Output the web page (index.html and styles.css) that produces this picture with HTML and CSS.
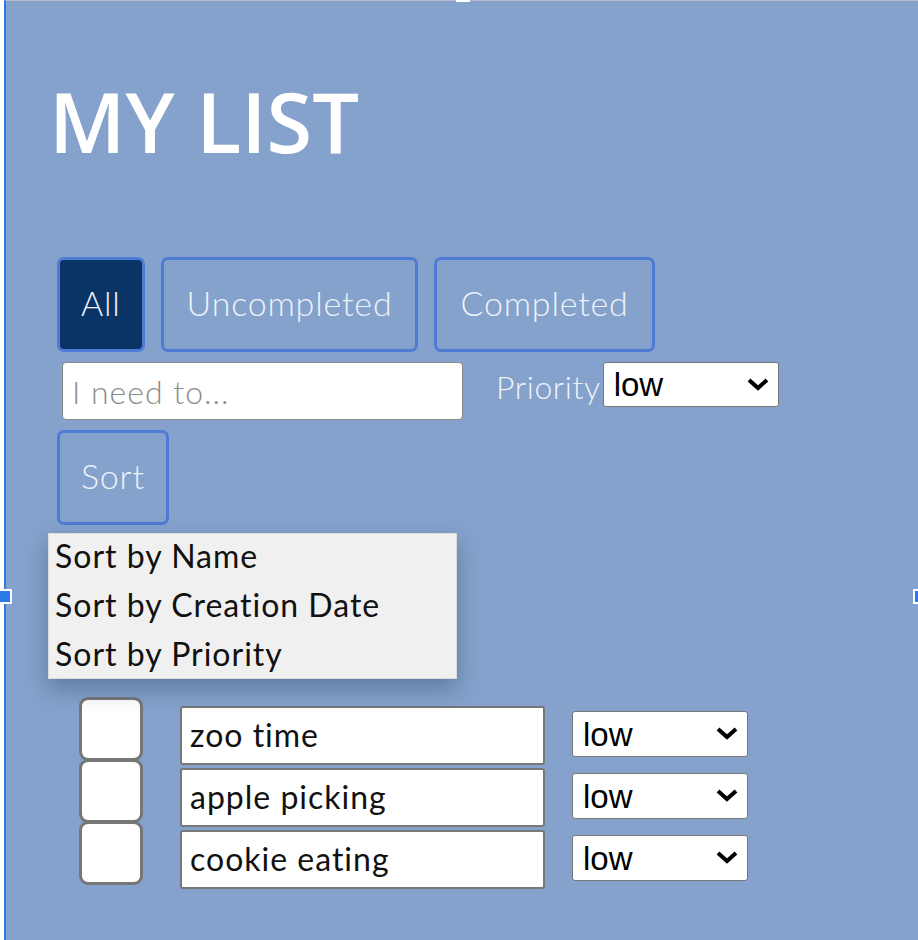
FILE: index.html
```html
<!DOCTYPE html>
<html lang="en">
<head>
  <meta charset="UTF-8">
  <meta name="viewport" content="width=device-width, initial-scale=1.0">
  <title>My List</title>
  <link rel="stylesheet" href="styles.css">
</head>
<body>
<div class="frame">
  <!-- maniglie di selezione -->
  <span class="handle handle-left"></span>
  <span class="handle handle-right"></span>
  <span class="notch"></span>

  <div class="app">
    <h1 class="title">MY LIST</h1>

    <div class="filters">
      <button class="filter active">All</button>
      <button class="filter">Uncompleted</button>
      <button class="filter">Completed</button>
    </div>

    <div class="new-item">
      <input class="new-input" type="text" placeholder="I need to...">
      <label class="priority-label">Priority</label>
      <span class="select-wrap">
        <select class="priority">
          <option>low</option>
          <option>medium</option>
          <option>high</option>
        </select>
        <svg class="chevron" viewBox="0 0 24 15"><path d="M3 3 L12 11 L21 3" fill="none" stroke="#000" stroke-width="4"/></svg>
      </span>
    </div>

    <div class="sort-box">
      <button class="filter sort">Sort</button>
      <ul class="sort-menu">
        <li>Sort by Name</li>
        <li>Sort by Creation Date</li>
        <li>Sort by Priority</li>
      </ul>
    </div>

    <ul class="todo-list">
      <li class="todo">
        <span class="check"></span>
        <input class="todo-text" type="text" value="zoo time">
        <span class="select-wrap small">
          <select class="priority"><option>low</option></select>
          <svg class="chevron" viewBox="0 0 24 15"><path d="M3 3 L12 11 L21 3" fill="none" stroke="#000" stroke-width="4"/></svg>
        </span>
      </li>
      <li class="todo">
        <span class="check"></span>
        <input class="todo-text" type="text" value="apple picking">
        <span class="select-wrap small">
          <select class="priority"><option>low</option></select>
          <svg class="chevron" viewBox="0 0 24 15"><path d="M3 3 L12 11 L21 3" fill="none" stroke="#000" stroke-width="4"/></svg>
        </span>
      </li>
      <li class="todo">
        <span class="check"></span>
        <input class="todo-text" type="text" value="cookie eating">
        <span class="select-wrap small">
          <select class="priority"><option>low</option></select>
          <svg class="chevron" viewBox="0 0 24 15"><path d="M3 3 L12 11 L21 3" fill="none" stroke="#000" stroke-width="4"/></svg>
        </span>
      </li>
    </ul>
  </div>
</div>
</body>
</html>
```

FILE: styles.css
```css
html,
body {
  overflow: hidden;
}
body {
  margin: 0;
  background-color: #fff;
  font-family: Lato, "Open Sans", sans-serif;
}
/* Riquadro selezionato */
.frame {
  position: relative;
  margin-left: 4px;
  height: 939px;
  background-color: #84a2cb;
  border-left: 2px solid #2a7be6;
  border-top: 1px solid #b9bcc6;
}
.handle {
  position: absolute;
  top: 588px;
  width: 10px;
  height: 11px;
  background-color: #2a7be6;
  border: 2px solid #fff;
}
.handle-left {
  left: -8px;
}
.handle-right {
  right: -9px;
}
.notch {
  position: absolute;
  top: -1px;
  left: 450px;
  width: 14px;
  height: 2px;
  background-color: #fff;
}
.app {
  padding: 78px 0 0 51px;
}
.title {
  margin: 0 0 95px -8px;
  font-family: "Open Sans", sans-serif;
  font-weight: 600;
  font-size: 83px;
  line-height: 83px;
  color: #fff;
}
/* Pulsanti filtro */
.filters {
  display: flex;
  gap: 16px;
}
.filter {
  height: 95px;
  padding: 0 23px 5px;
  border: 3px solid #4e7bd4;
  border-radius: 7px;
  background-color: transparent;
  color: #eef2f9;
  font-family: Lato, sans-serif;
  font-weight: 300;
  font-size: 34px;
  letter-spacing: 0.8px;
}
.filter.active {
  background-color: #0b3466;
  padding: 0 21px 5px;
}
.new-item {
  display: flex;
  align-items: flex-start;
  margin-top: 10px;
}
.new-input {
  width: 401px;
  height: 58px;
  margin-left: 5px;
  box-sizing: border-box;
  padding: 0 9px;
  border: 1.5px solid #888;
  border-radius: 4px;
  font-family: Lato, sans-serif;
  font-size: 32px;
  letter-spacing: 1px;
}
.new-input::placeholder {
  color: #8c8c8c;
  font-weight: 300;
}
.priority-label {
  margin: 5px 2px 0 33px;
  font-weight: 300;
  font-size: 32px;
  letter-spacing: 0.6px;
  color: #eef2f9;
}
.select-wrap {
  position: relative;
  display: inline-block;
}
.priority {
  appearance: none;
  width: 176px;
  height: 45px;
  padding: 0 0 0 10px;
  border: 1.5px solid #777;
  border-radius: 3px;
  background-color: #fff;
  color: #000;
  font-family: "Liberation Sans", Arial, sans-serif;
  font-size: 33px;
}
.chevron {
  position: absolute;
  right: 9px;
  top: 15px;
  width: 24px;
  height: 15px;
  pointer-events: none;
}
/* Menu ordinamento */
.sort-box {
  position: relative;
  margin-top: 10px;
}
.sort {
  padding: 0 21px 5px;
}
.sort-menu {
  position: absolute;
  top: 103px;
  left: -9px;
  width: 409px;
  margin: 0;
  padding: 4px 0 0;
  box-sizing: border-box;
  height: 146px;
  list-style: none;
  background-color: #f0f0f0;
  border: 1px solid #dcdcdc;
  box-shadow: 0 10px 22px rgba(30, 50, 90, 0.35);
}
.sort-menu li {
  padding-left: 6px;
  height: 49px;
  line-height: 35px;
  font-size: 32px;
  letter-spacing: 1px;
  color: #111;
}
/* Lista */
.todo-list {
  list-style: none;
  margin: 172px 0 0 22px;
  padding: 0;
}
.todo {
  display: flex;
  align-items: flex-start;
  height: 62px;
}
.check {
  width: 64px;
  height: 64px;
  box-sizing: border-box;
  border: 3px solid #777;
  border-radius: 9px;
  background-color: #fff;
}
.todo-text {
  width: 365px;
  height: 59px;
  margin: 9px 0 0 37px;
  box-sizing: border-box;
  padding: 0 8px 2px;
  border: 2px solid #777;
  border-radius: 3px;
  font-family: Lato, sans-serif;
  font-size: 32px;
  letter-spacing: 1px;
  color: #111;
}
.select-wrap.small {
  margin: 14px 0 0 27px;
}
.select-wrap.small .priority {
  height: 46px;
}
```
